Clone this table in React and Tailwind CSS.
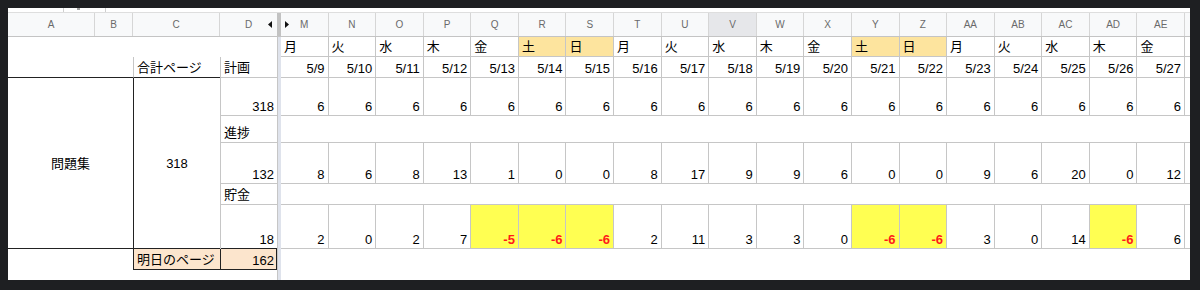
import React from "react";

const COLS = ["M","N","O","P","Q","R","S","T","U","V","W","X","Y","Z","AA","AB","AC","AD","AE"];
const DAYS = ["月","火","水","木","金","土","日","月","火","水","木","金","土","日","月","火","水","木","金"];
const PROG = [8,6,8,13,1,0,0,8,17,9,9,6,0,0,9,6,20,0,12];
const SAVE = [2,0,2,7,-5,-6,-6,2,11,3,3,0,-6,-6,3,0,14,-6,6];

function TriLeft() {
  return (
    <svg width="4" height="7" viewBox="0 0 4 7"><path d="M4 0 L0 3.5 L4 7Z" fill="#111" /></svg>
  );
}
function TriRight() {
  return (
    <svg width="4" height="7" viewBox="0 0 4 7"><path d="M0 0 L4 3.5 L0 7Z" fill="#111" /></svg>
  );
}

const GRID = "grid grid-cols-[repeat(19,minmax(0,1fr))_5px]";

export default function App() {
  return (
    <div className="w-[1200px] h-[290px] bg-[#1e1f22] pt-[8px] pl-[8px] [font-family:'Liberation_Sans','Noto_Sans_CJK_JP',sans-serif] text-[13px] leading-[15px] text-black">
      <div className="w-[1182px] h-[272px] bg-white flex flex-col overflow-hidden">
        {/* toolbar remnant */}
        <div className="h-[5px] flex border-b border-[#dedede]">
          <div className="w-[55px]" />
          <div className="w-px bg-[#cfcfcf]" />
          <div className="w-[13px]" />
          <div className="w-[3px] h-[2px] bg-[#a0a0a0]" />
          <div className="w-[25px]" />
          <div className="w-px bg-[#cfcfcf]" />
        </div>

        {/* column header */}
        <div className="h-[24px] flex bg-[#f8f9fa] border-b border-[#c4c4c4] text-[10px] leading-none text-[#6a6a6a]">
          <div className="w-[87px] border-r border-[#d6d6d6] flex items-center justify-center">A</div>
          <div className="w-[38px] border-r border-[#d6d6d6] flex items-center justify-center">B</div>
          <div className="w-[87px] border-r border-[#d6d6d6] flex items-center justify-center">C</div>
          <div className="w-[57px] relative flex items-center justify-center">
            D
            <div className="absolute right-[5px] top-[8px] flex"><TriLeft /></div>
          </div>
          <div className="w-[4px] bg-[#c2c2c2]" />
          <div className={`w-[909px] ${GRID}`}>
            {COLS.map((c, i) => (
              <div
                key={c}
                className={`relative border-r border-[#d6d6d6] flex items-center justify-center ${c === "V" ? "bg-[#e6e7ea]" : ""}`}
              >
                {c}
                {i === 0 && (
                  <div className="absolute left-[4px] top-[8px] flex"><TriRight /></div>
                )}
              </div>
            ))}
            <div />
          </div>
        </div>

        {/* body */}
        <div className="flex-1 flex">
          {/* frozen left block */}
          <div className="w-[269px] flex flex-col">
            <div className="h-[20px]" />
            <div className="h-[21px] flex">
              <div className="w-[125px] border-b border-[#222]" />
              <div className="w-[87px] border-l border-[#c6c6c6] border-b border-b-[#222] pl-[3px] pb-[2px] flex items-end">合計ページ</div>
              <div className="w-[57px] border-l border-b border-[#c6c6c6] pl-[3px] pb-[2px] flex items-end">計画</div>
            </div>
            <div className="h-[171px] flex">
              <div className="w-[125px] border-b border-[#222] flex items-center justify-center">問題集</div>
              <div className="w-[87px] border-l border-b border-[#222] flex items-center justify-center">318</div>
              <div className="w-[57px] border-l border-[#c6c6c6] flex flex-col">
                <div className="h-[38px] border-b border-[#c6c6c6] flex items-end justify-end pr-[3px] pb-[1px]">318</div>
                <div className="h-[27px] border-b border-[#c6c6c6] flex items-end pl-[3px] pb-[2px]">進捗</div>
                <div className="h-[41px] border-b border-[#c6c6c6] flex items-end justify-end pr-[3px] pb-[1px]">132</div>
                <div className="h-[21px] border-b border-[#c6c6c6] flex items-end pl-[3px] pb-[2px]">貯金</div>
                <div className="h-[44px] border-b border-[#222] flex items-end justify-end pr-[3px] pb-[1px]">18</div>
              </div>
            </div>
            <div className="h-[21px] flex">
              <div className="w-[125px]" />
              <div className="w-[87px] bg-[#fce5cd] border-l border-b border-[#222] pl-[3px] pb-[2px] flex items-end">明日のページ</div>
              <div className="w-[57px] bg-[#fce5cd] border-l border-r border-b border-[#222] pr-[2px] pb-[1px] flex items-end justify-end">162</div>
            </div>
          </div>

          {/* frozen divider */}
          <div className="w-[4px] border-l border-[#c6c6c6] bg-[#dfe3ec]" />

          {/* scrolling block */}
          <div className="w-[909px] flex flex-col">
            {/* days */}
            <div className={`h-[20px] ${GRID}`}>
              {DAYS.map((d, i) => (
                <div
                  key={i}
                  className={`border-r border-b border-[#c6c6c6] flex items-end pl-[3px] pb-[2px] ${d === "土" || d === "日" ? "bg-[#fde49e]" : ""}`}
                >
                  {d}
                </div>
              ))}
              <div className="border-b border-[#c6c6c6]" />
            </div>
            {/* dates */}
            <div className={`h-[21px] ${GRID}`}>
              {DAYS.map((_, i) => (
                <div key={i} className="border-r border-b border-[#c6c6c6] flex items-end justify-end pr-[3px] pb-[1px]">
                  {`5/${9 + i}`}
                </div>
              ))}
              <div className="border-b border-[#c6c6c6]" />
            </div>
            {/* plan */}
            <div className={`h-[38px] ${GRID}`}>
              {DAYS.map((_, i) => (
                <div key={i} className="border-r border-b border-[#c6c6c6] flex items-end justify-end pr-[3px] pb-[1px]">6</div>
              ))}
              <div className="border-b border-[#c6c6c6]" />
            </div>
            {/* progress label row */}
            <div className="h-[27px] border-b border-[#c6c6c6]" />
            {/* progress */}
            <div className={`h-[41px] ${GRID}`}>
              {PROG.map((v, i) => (
                <div key={i} className="border-r border-b border-[#c6c6c6] flex items-end justify-end pr-[3px] pb-[1px]">{v}</div>
              ))}
              <div className="border-b border-[#c6c6c6]" />
            </div>
            {/* savings label row */}
            <div className="h-[21px] border-b border-[#c6c6c6]" />
            {/* savings */}
            <div className={`h-[44px] ${GRID}`}>
              {SAVE.map((v, i) => (
                <div
                  key={i}
                  className={`border-r border-b border-[#c6c6c6] flex items-end justify-end pr-[3px] pb-[1px] ${v < 0 ? "bg-[#ffff52] text-[#ff1a1a] font-bold" : ""}`}
                >
                  {v}
                </div>
              ))}
              <div className="border-b border-[#c6c6c6]" />
            </div>
          </div>
        </div>
      </div>
    </div>
  );
}
